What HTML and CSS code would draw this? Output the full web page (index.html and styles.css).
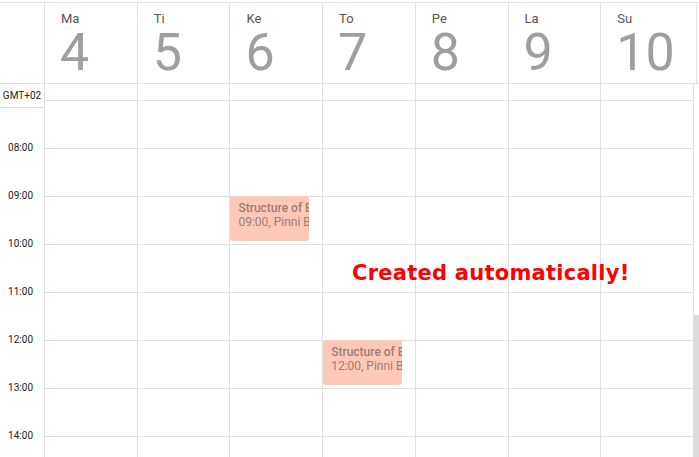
FILE: index.html
```html
<!DOCTYPE html>
<html lang="fi">
<head>
<meta charset="utf-8">
<title>Calendar week</title>
<link rel="stylesheet" href="styles.css">
</head>
<body>
<div class="app">
  <div class="head-wrap">
    <div class="head">
      <div class="hgut"></div>
      <div class="hcell"><div class="dname">Ma</div><div class="dnum">4</div></div>
      <div class="hcell"><div class="dname">Ti</div><div class="dnum">5</div></div>
      <div class="hcell"><div class="dname">Ke</div><div class="dnum">6</div></div>
      <div class="hcell"><div class="dname">To</div><div class="dnum">7</div></div>
      <div class="hcell"><div class="dname">Pe</div><div class="dnum">8</div></div>
      <div class="hcell"><div class="dname">La</div><div class="dnum">9</div></div>
      <div class="hcell"><div class="dname">Su</div><div class="dnum">10</div></div>
    </div>
  </div>
  <div class="content">
    <div class="body">
      <div class="row tail">
        <div class="gut"></div>
        <div class="cell"></div><div class="cell"></div><div class="cell"></div><div class="cell"></div><div class="cell"></div><div class="cell"></div><div class="cell"></div>
      </div>
      <div class="row">
        <div class="gut"></div>
        <div class="cell"></div><div class="cell"></div><div class="cell"></div><div class="cell"></div><div class="cell"></div><div class="cell"></div><div class="cell"></div>
      </div>
      <div class="row">
        <div class="gut"><span class="time">08:00</span></div>
        <div class="cell"></div><div class="cell"></div><div class="cell"></div><div class="cell"></div><div class="cell"></div><div class="cell"></div><div class="cell"></div>
      </div>
      <div class="row">
        <div class="gut"><span class="time">09:00</span></div>
        <div class="cell"></div><div class="cell"></div>
        <div class="cell">
          <div class="event"><div class="etitle">Structure of Biology</div><div class="etime">09:00, Pinni B</div></div>
        </div>
        <div class="cell"></div><div class="cell"></div><div class="cell"></div><div class="cell"></div>
      </div>
      <div class="row">
        <div class="gut"><span class="time">10:00</span></div>
        <div class="cell"></div><div class="cell"></div><div class="cell"></div><div class="cell"></div><div class="cell"></div><div class="cell"></div><div class="cell"></div>
      </div>
      <div class="row">
        <div class="gut"><span class="time">11:00</span></div>
        <div class="cell"></div><div class="cell"></div><div class="cell"></div><div class="cell"></div><div class="cell"></div><div class="cell"></div><div class="cell"></div>
      </div>
      <div class="row">
        <div class="gut"><span class="time">12:00</span></div>
        <div class="cell"></div><div class="cell"></div><div class="cell"></div>
        <div class="cell">
          <div class="event"><div class="etitle">Structure of Biology</div><div class="etime">12:00, Pinni B</div></div>
        </div>
        <div class="cell"></div><div class="cell"></div><div class="cell"></div>
      </div>
      <div class="row">
        <div class="gut"><span class="time">13:00</span></div>
        <div class="cell"></div><div class="cell"></div><div class="cell"></div><div class="cell"></div><div class="cell"></div><div class="cell"></div><div class="cell"></div>
      </div>
      <div class="row">
        <div class="gut"><span class="time">14:00</span></div>
        <div class="cell"></div><div class="cell"></div><div class="cell"></div><div class="cell"></div><div class="cell"></div><div class="cell"></div><div class="cell"></div>
      </div>
      <div class="gmt">GMT+02</div>
      <div class="note">Created automatically!</div>
    </div>
    <div class="scroll"><div class="thumb"></div></div>
  </div>
</div>
</body>
</html>
```
FILE: styles.css
```css
* { box-sizing: border-box; }
html, body { margin: 0; padding: 0; }
body {
  font-family: Roboto, "Noto Sans", "Liberation Sans", sans-serif;
  background: #fff;
  overflow: hidden;
}
.app {
  width: 699px;
  height: 457px;
  display: flex;
  flex-direction: column;
  overflow: hidden;
}
.head-wrap {
  margin-top: 2px;
  border-top: 1px solid #e0e0e0;
  border-bottom: 1px solid #e0e0e0;
  flex: none;
}
.head {
  display: grid;
  grid-template-columns: 44px repeat(6, 92.71px) 1fr;
  width: 697px;
  height: 80px;
}
.hcell {
  border-left: 1px solid #e0e0e0;
  padding: 8px 0 0 16px;
}
.hcell:last-child { border-right: 1px solid #e0e0e0; }
.dname {
  font-size: 13px;
  line-height: 15px;
  color: #555;
}
.dnum {
  font-size: 52px;
  line-height: 50px;
  margin-top: 2px;
  color: #9e9e9e;
  margin-left: -1px;
}
.content {
  display: flex;
  flex: 1;
  min-height: 0;
}
.body {
  width: 693px;
  flex: none;
  position: relative;
  overflow: hidden;
}
.row {
  display: grid;
  grid-template-columns: 44px repeat(7, 1fr);
  height: 48px;
}
.row.tail { height: 16px; }
.cell {
  border-left: 1px solid #e0e0e0;
  border-top: 1px solid #e0e0e0;
  position: relative;
}
.row.tail .cell { border-top: none; }
.time {
  display: block;
  font-size: 10px;
  line-height: 12px;
  margin-top: -6px;
  text-align: right;
  padding-right: 11px;
  color: #222;
}
.event {
  position: absolute;
  top: -1px;
  left: 0;
  width: 79px;
  height: 45px;
  background: #fcc9b8;
  border-radius: 3px;
  padding: 5px 0 0 8px;
  overflow: hidden;
  white-space: nowrap;
  color: #9c7d74;
  font-size: 12px;
  line-height: 14px;
}
.etitle { font-weight: 500; }
.gmt {
  position: absolute;
  top: 0;
  left: 0;
  width: 44px;
  height: 24px;
  border-bottom: 1px solid #e0e0e0;
  background: #fff;
  font-size: 10px;
  line-height: 23px;
  text-align: center;
  color: #222;
}
.note {
  position: absolute;
  left: 352px;
  top: 177px;
  font-family: "DejaVu Sans", "Liberation Sans", sans-serif;
  font-weight: bold;
  font-size: 21px;
  line-height: 24px;
  letter-spacing: 0.25px;
  color: #ff0000;
  white-space: nowrap;
}
.scroll {
  width: 6px;
  flex: none;
  border-left: 1px solid #e0e0e0;
  display: flex;
  flex-direction: column;
}
.thumb {
  margin-top: auto;
  margin-left: -1px;
  width: 6px;
  height: 142px;
  background: #dcdcdc;
}
```
